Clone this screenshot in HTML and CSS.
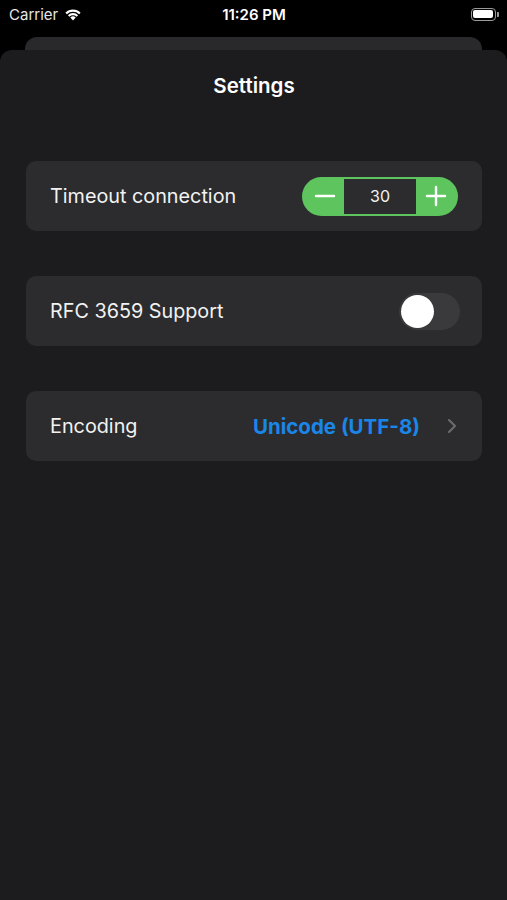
FILE: index.html
```html
<!DOCTYPE html>
<html lang="en">
<head>
    <meta charset="UTF-8">
    <meta name="viewport" content="width=device-width, initial-scale=1.0">
    <title>Settings</title>
    <link rel="stylesheet" href="styles.css">
</head>
<body>
    <div class="status-bar">
        <div class="carrier">
            Carrier
            <svg class="wifi" width="18" height="13" viewBox="0 0 18 13">
                <path d="M9 12.5 L6.3 9.6 A3.9 3.9 0 0 1 11.7 9.6 Z" fill="#fff"/>
                <path d="M3.9 7.2 A7.3 7.3 0 0 1 14.1 7.2 L12.6 8.7 A5.2 5.2 0 0 0 5.4 8.7 Z" fill="#fff"/>
                <path d="M1.4 4.7 A10.8 10.8 0 0 1 16.6 4.7 L15.1 6.2 A8.7 8.7 0 0 0 2.9 6.2 Z" fill="#fff"/>
            </svg>
        </div>
        <div class="clock">11:26 PM</div>
        <div class="battery">
            <div class="battery-body"><div class="battery-fill"></div></div>
            <div class="battery-tip"></div>
        </div>
    </div>

    <div class="back-card"></div>

    <div class="sheet">
        <h1 class="sheet-title">Settings</h1>

        <div class="row">
            <span class="row-label">Timeout connection</span>
            <div class="stepper">
                <button class="step-btn">
                    <svg width="22" height="22" viewBox="0 0 22 22"><path d="M2 11 H20" stroke="#fff" stroke-width="2.4" stroke-linecap="round"/></svg>
                </button>
                <div class="step-value">30</div>
                <button class="step-btn">
                    <svg width="22" height="22" viewBox="0 0 22 22"><path d="M2 11 H20 M11 2 V20" stroke="#fff" stroke-width="2.4" stroke-linecap="round"/></svg>
                </button>
            </div>
        </div>

        <div class="row">
            <span class="row-label">RFC 3659 Support</span>
            <div class="toggle"><div class="knob"></div></div>
        </div>

        <div class="row">
            <span class="row-label">Encoding</span>
            <div class="row-value">
                <span class="encoding">Unicode (UTF-8)</span>
                <svg width="10" height="16" viewBox="0 0 10 16"><path d="M2 2 L8 8 L2 14" fill="none" stroke="#6b6b70" stroke-width="2" stroke-linecap="round" stroke-linejoin="round"/></svg>
            </div>
        </div>
    </div>
</body>
</html>
```

FILE: styles.css
```css
* {
    margin: 0;
    padding: 0;
    box-sizing: border-box;
}

html, body {
    height: 100%;
}

body {
    font-family: 'Inter', 'Liberation Sans', sans-serif;
    background-color: #000;
    color: #fff;
    overflow: hidden;
}

.status-bar {
    height: 28px;
    display: flex;
    align-items: center;
    justify-content: space-between;
    padding: 0 8px 0 9px;
    font-size: 15px;
}

.carrier {
    display: flex;
    align-items: center;
    gap: 6px;
    color: #e6e6e6;
    width: 120px;
}

.clock {
    font-weight: 600;
}

.battery {
    width: 120px;
    display: flex;
    justify-content: flex-end;
    align-items: center;
}

.battery-body {
    width: 25px;
    height: 13px;
    border: 1.5px solid #9a9a9a;
    border-radius: 4px;
    padding: 1.5px;
}

.battery-fill {
    width: 100%;
    height: 100%;
    background-color: #fff;
    border-radius: 2px;
}

.battery-tip {
    width: 2px;
    height: 5px;
    margin-left: 1px;
    background-color: #9a9a9a;
    border-radius: 0 1px 1px 0;
}

.back-card {
    margin: 9px 25px 0;
    height: 30px;
    background-color: #29292c;
    border-radius: 12px 12px 0 0;
}

.sheet {
    margin-top: -17px;
    height: 850px;
    background-color: #1c1c1e;
    border-radius: 12px 12px 0 0;
    padding: 0 25px 0 26px;
}

.sheet-title {
    text-align: center;
    font-size: 20.5px;
    font-weight: 600;
    padding-top: 23px;
    height: 111px;
}

.row {
    height: 70px;
    background-color: #2c2c2e;
    border-radius: 10px;
    display: flex;
    align-items: center;
    justify-content: space-between;
    padding: 0 22px 0 24px;
    margin-bottom: 45px;
}

.row-label {
    font-size: 19.8px;
    color: #f2f2f2;
}

.stepper {
    display: flex;
    height: 39px;
    margin-right: 2px;
    background-color: #5ec55e;
    border-radius: 20px;
    padding: 2px 0;
}

.step-btn {
    width: 42px;
    background: none;
    border: none;
    display: flex;
    align-items: center;
    justify-content: center;
}

.step-btn:first-child {
    padding-left: 3px;
}

.step-btn:last-child {
    padding-right: 3px;
}

.step-value {
    width: 72px;
    background-color: #2c2c2e;
    display: flex;
    align-items: center;
    justify-content: center;
    font-size: 16px;
    color: #f2f2f2;
}

.toggle {
    width: 61px;
    height: 37px;
    background-color: #3a3a3d;
    border-radius: 19px;
    padding: 2px;
}

.knob {
    width: 33px;
    height: 33px;
    background-color: #fff;
    border-radius: 50%;
}

.row-value {
    display: flex;
    align-items: center;
    gap: 27px;
    margin-right: 3px;
}

.encoding {
    color: #1a86e8;
    font-size: 20.5px;
    font-weight: 700;
}
```
